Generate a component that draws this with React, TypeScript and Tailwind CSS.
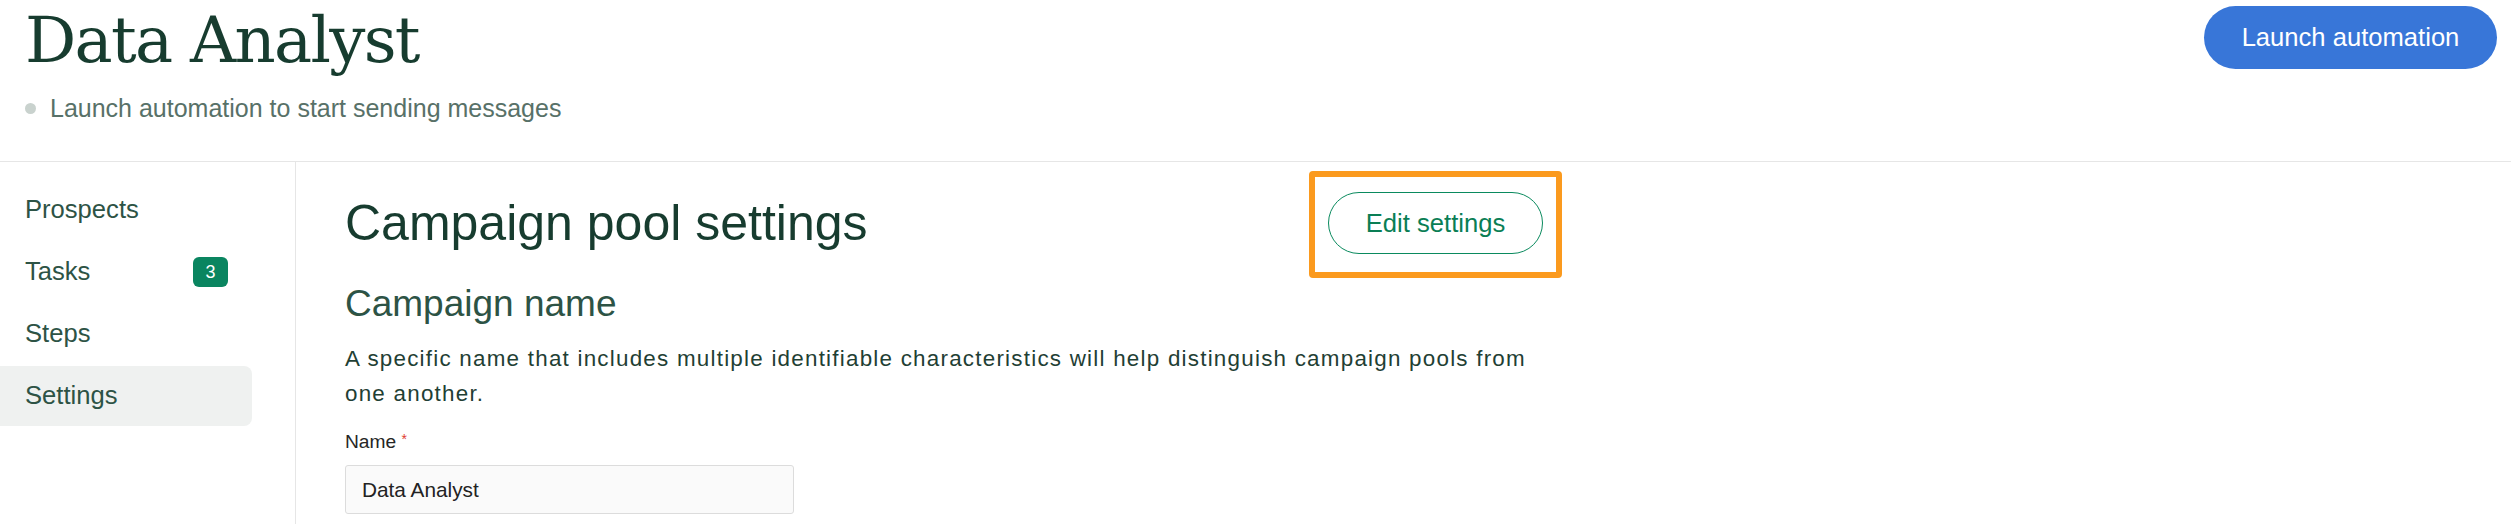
import { ReactNode } from 'react';

const sans = "font-['Liberation_Sans',Arial,sans-serif]";

function NavItem({ label, active, badge }: { label: string; active?: boolean; badge?: ReactNode }) {
  return (
    <div
      className={`flex h-[60px] items-center justify-between rounded-r-[8px] pl-[25px] pr-[24px] text-[25.6px] leading-none text-[#2d5345] ${
        active ? 'bg-[#eff1f0]' : ''
      }`}
    >
      <span>{label}</span>
      {badge}
    </div>
  );
}

export default function App() {
  return (
    <div className={`flex h-screen w-full flex-col overflow-hidden bg-white ${sans}`}>
      {/* header */}
      <div className="flex h-[162px] shrink-0 justify-between border-b border-[#e6e6e6] pl-[25px] pr-[14px]">
        <div className="pt-[4px]">
          <h1 className="font-['DejaVu_Serif','Liberation_Serif',serif] text-[64px] leading-[72px] tracking-[-0.027em] text-[#173c2f]">
            Data Analyst
          </h1>
          <div className="mt-[20px] flex items-center">
            <span className="h-[11px] w-[11px] rounded-full bg-[#c9d2ce]" />
            <span className="ml-[14px] text-[25px] leading-[25px] text-[#587168]">
              Launch automation to start sending messages
            </span>
          </div>
        </div>
        <div className="pt-[6px]">
          <button className="flex h-[63px] w-[293px] items-center justify-center rounded-full bg-[#3876d8] text-[25.6px] text-white">
            Launch automation
          </button>
        </div>
      </div>

      <div className="flex flex-1">
        {/* sidebar */}
        <div className="flex w-[296px] shrink-0 flex-col gap-[2px] border-r border-[#e6e6e6] pr-[43px] pt-[18px]">
          <NavItem label="Prospects" />
          <NavItem
            label="Tasks"
            badge={
              <span className="flex h-[30px] w-[35px] items-center justify-center rounded-[6px] bg-[#0a8560] text-[18px] text-white">
                3
              </span>
            }
          />
          <NavItem label="Steps" />
          <NavItem label="Settings" active />
        </div>

        {/* main */}
        <div className="pl-[49px] pt-[30px]">
          <div className="w-[1198px]">
            <div className="flex h-[62px] items-center justify-between">
              <h2 className="text-[50px] leading-none text-[#173c2f]">Campaign pool settings</h2>
              <div className="relative">
                <button className="flex h-[62px] w-[215px] items-center justify-center rounded-full border-[1.5px] border-[#0a8a5e] bg-white text-[25.6px] text-[#0a7e55]">
                  Edit settings
                </button>
                <div className="pointer-events-none absolute -bottom-[24px] -left-[19px] -right-[19px] -top-[21px] rounded-[4px] border-[6px] border-[#fb9a1e]" />
              </div>
            </div>

            <h3 className="mt-[31px] text-[37px] leading-none text-[#2d5345]">Campaign name</h3>
            <p className="mt-[19px] text-[22.4px] leading-[35px] tracking-[0.055em] text-[#1f4034]">
              A specific name that includes multiple identifiable characteristics will help distinguish campaign pools from
              one another.
            </p>

            <div className="mt-[21px] text-[19.2px] leading-none text-[#262626]">
              Name <span className="align-top text-[14px] text-[#e03c31]">*</span>
            </div>
            <div className="mt-[14px] flex h-[49px] w-[449px] items-center rounded-[3px] border border-[#dcdcdc] bg-[#fafafa] px-[16px] text-[20.8px] text-[#222222]">
              Data Analyst
            </div>
          </div>
        </div>
      </div>
    </div>
  );
}
